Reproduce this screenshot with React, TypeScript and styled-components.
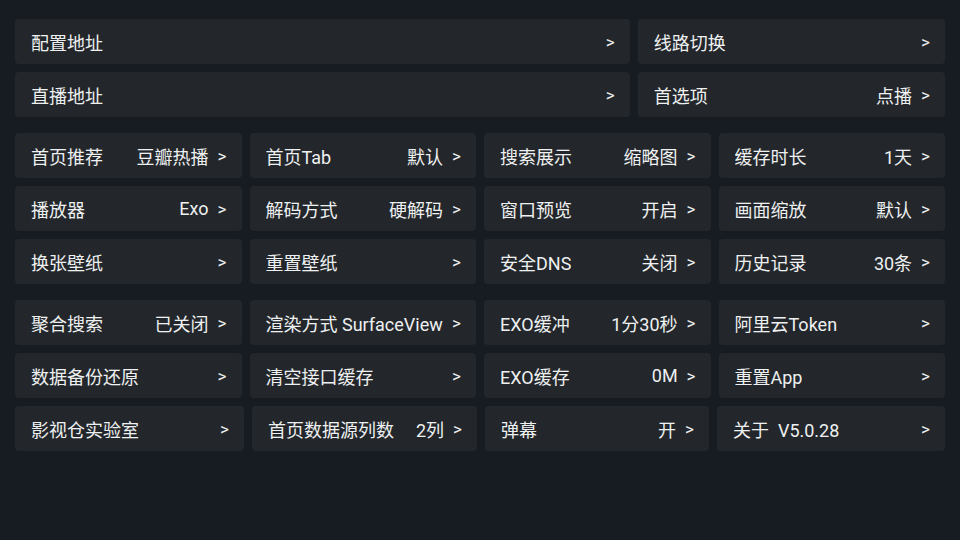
import styled, { createGlobalStyle } from 'styled-components'

type Item = {
  label: string
  value?: string
}

type Group = {
  rows: { cols: string; items: Item[] }[]
}

const quarter = 'repeat(4, 1fr)'

const groups: Group[] = [
  {
    rows: [
      { cols: '2fr 1fr', items: [{ label: '配置地址' }, { label: '线路切换' }] },
      { cols: '2fr 1fr', items: [{ label: '直播地址' }, { label: '首选项', value: '点播' }] }
    ]
  },
  {
    rows: [
      {
        cols: quarter,
        items: [
          { label: '首页推荐', value: '豆瓣热播' },
          { label: '首页Tab', value: '默认' },
          { label: '搜索展示', value: '缩略图' },
          { label: '缓存时长', value: '1天' }
        ]
      },
      {
        cols: quarter,
        items: [
          { label: '播放器', value: 'Exo' },
          { label: '解码方式', value: '硬解码' },
          { label: '窗口预览', value: '开启' },
          { label: '画面缩放', value: '默认' }
        ]
      },
      {
        cols: quarter,
        items: [
          { label: '换张壁纸' },
          { label: '重置壁纸' },
          { label: '安全DNS', value: '关闭' },
          { label: '历史记录', value: '30条' }
        ]
      }
    ]
  },
  {
    rows: [
      {
        cols: quarter,
        items: [
          { label: '聚合搜索', value: '已关闭' },
          { label: '渲染方式 SurfaceView' },
          { label: 'EXO缓冲', value: '1分30秒' },
          { label: '阿里云Token' }
        ]
      },
      {
        cols: quarter,
        items: [
          { label: '数据备份还原' },
          { label: '清空接口缓存' },
          { label: 'EXO缓存', value: '0M' },
          { label: '重置App' }
        ]
      },
      {
        cols: '229fr 225fr 224fr 228fr',
        items: [
          { label: '影视仓实验室' },
          { label: '首页数据源列数', value: '2列' },
          { label: '弹幕', value: '开' },
          { label: '关于  V5.0.28' }
        ]
      }
    ]
  }
]

const GlobalStyle = createGlobalStyle`
  html, body {
    margin: 0;
    padding: 0;
    background: #171c23;
  }

  body {
    font-family: Roboto, "Noto Sans CJK SC", sans-serif;
    -webkit-font-smoothing: antialiased;
  }
`

export default function App() {
  return (
    <>
      <GlobalStyle />
      <Page>
        {groups.map((group, gi) => (
          <Section key={gi}>
            {group.rows.map((row, ri) => (
              <Row key={ri} $cols={row.cols}>
                {row.items.map((item) => (
                  <Card key={item.label}>
                    <Label>{item.label}</Label>
                    <Value>
                      {item.value && <span>{item.value}</span>}
                      <Arrow>&gt;</Arrow>
                    </Value>
                  </Card>
                ))}
              </Row>
            ))}
          </Section>
        ))}
      </Page>
    </>
  )
}

const Page = styled.div`
  display: flex;
  flex-direction: column;
  gap: 16px;
  width: 960px;
  height: 540px;
  box-sizing: border-box;
  padding: 19px 15px;
`

const Section = styled.div`
  display: flex;
  flex-direction: column;
  gap: 8px;
`

const Row = styled.div<{ $cols: string }>`
  display: grid;
  grid-template-columns: ${(p) => p.$cols};
  gap: 8px;
`

const Card = styled.div`
  display: flex;
  align-items: center;
  justify-content: space-between;
  height: 45px;
  box-sizing: border-box;
  padding: 0 15px 0 16px;
  border-radius: 4px;
  background: #23272b;
  color: #eef0f1;
  font-size: 18px;
  white-space: pre;
  min-width: 0;
`

const Label = styled.span`
  overflow: hidden;
`

const Value = styled.span`
  display: flex;
  align-items: center;
  gap: 9px;
`

const Arrow = styled.span`
  font-size: 17px;
`
